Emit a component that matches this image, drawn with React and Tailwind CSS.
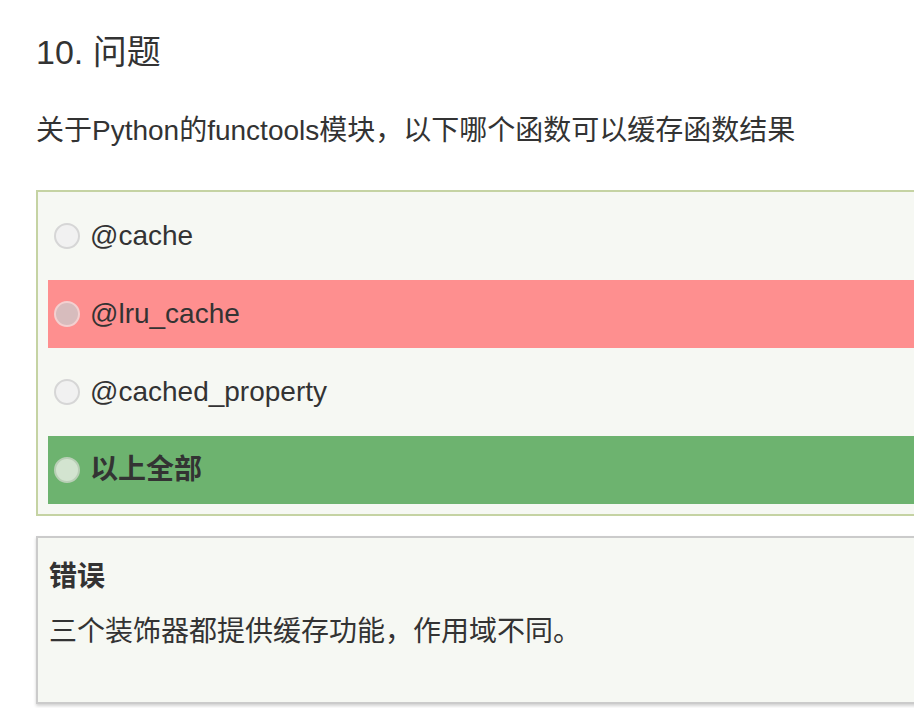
const options = [
  { label: '@cache', state: 'none' },
  { label: '@lru_cache', state: 'wrong' },
  { label: '@cached_property', state: 'none' },
  { label: '以上全部', state: 'right' },
];

function Radio({ state }) {
  if (state === 'wrong') {
    return <span className="w-[26px] h-[26px] shrink-0 rounded-full border-2 border-[#f3d0d0] bg-[#d7bcbd]" />;
  }
  if (state === 'right') {
    return <span className="w-[26px] h-[26px] shrink-0 rounded-full border-2 border-[#b9cfb6] bg-[#d3e4d0]" />;
  }
  return <span className="w-[26px] h-[26px] shrink-0 rounded-full border-2 border-[#d6d6d6] bg-[#f1f1f1]" />;
}

export default function App() {
  return (
    <div
      className="w-[914px] h-[708px] overflow-hidden bg-white text-[#333]"
      style={{ fontFamily: '"Liberation Sans", "Noto Sans CJK SC", sans-serif' }}
    >
      <div className="w-[1000px] pl-[36px] pt-[25px]">
        <h2 className="text-[34px] leading-[54px] font-normal">10. 问题</h2>
        <p className="mt-[32px] text-[28px] leading-[40px]">关于Python的functools模块，以下哪个函数可以缓存函数结果</p>

        <div className="mt-[39px] border-2 border-[#c5d3a3] bg-[#f6f8f3] p-[10px] flex flex-col gap-[10px]">
          {options.map((o) => (
            <div
              key={o.label}
              className={
                'h-[68px] flex items-center gap-[10px] pl-[6px] text-[28px] ' +
                (o.state === 'wrong' ? 'bg-[#fe8f8f]' : o.state === 'right' ? 'bg-[#6db36f] font-bold' : '')
              }
            >
              <Radio state={o.state} />
              <span>{o.label}</span>
            </div>
          ))}
        </div>

        <div className="mt-[20px] h-[168px] border-2 border-[#cbcbcb] bg-[#f6f8f3] shadow-[0_2px_3px_rgba(0,0,0,0.18)] pl-[11px] pt-[19px]">
          <p className="text-[28px] leading-[40px] font-bold">错误</p>
          <p className="mt-[15px] text-[28px] leading-[40px]">三个装饰器都提供缓存功能，作用域不同。</p>
        </div>
      </div>
    </div>
  );
}
